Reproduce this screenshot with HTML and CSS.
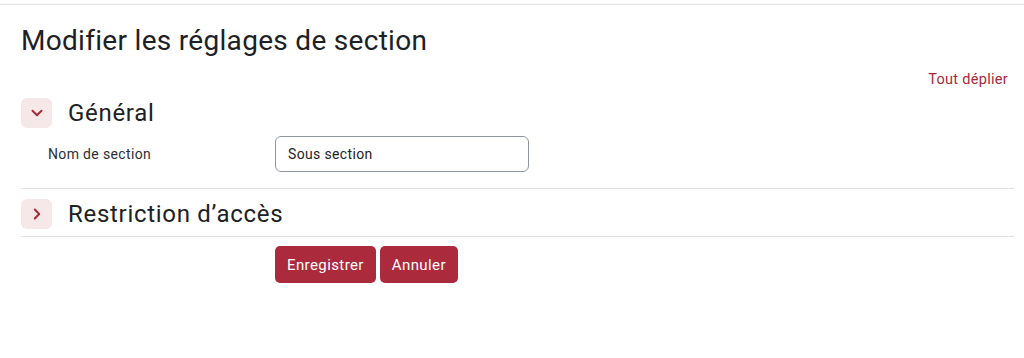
FILE: index.html
```html
<!DOCTYPE html>
<html>
<head>
  <title>Modifier les réglages de section</title>
  <link rel="stylesheet" href="styles.css">
</head>
<body>
  <div class="topbar"></div>

  <div class="page">
    <h1>Modifier les réglages de section</h1>

    <div class="expand-all">
      <a href="#">Tout déplier</a>
    </div>

    <form class="section-form">
      <fieldset class="group open">
        <div class="group-head">
          <span class="toggle">
            <svg width="14" height="14" viewBox="0 0 14 14"><path d="M2.5 4.8 L7 9.2 L11.5 4.8" fill="none" stroke="#a8273a" stroke-width="2" stroke-linecap="round" stroke-linejoin="round"/></svg>
          </span>
          <h3>Général</h3>
        </div>
        <div class="form-row">
          <label for="name">Nom de section</label>
          <input type="text" id="name" value="Sous section">
        </div>
      </fieldset>

      <fieldset class="group">
        <div class="group-head">
          <span class="toggle">
            <svg width="14" height="14" viewBox="0 0 14 14"><path d="M4.8 2.5 L9.2 7 L4.8 11.5" fill="none" stroke="#a8273a" stroke-width="2" stroke-linecap="round" stroke-linejoin="round"/></svg>
          </span>
          <h3>Restriction d’accès</h3>
        </div>
      </fieldset>

      <div class="actions">
        <button type="submit">Enregistrer</button>
        <button type="button">Annuler</button>
      </div>
    </form>
  </div>
</body>
</html>
```

FILE: styles.css
```css
body {
  margin: 0;
  font-family: Roboto, "Liberation Sans", sans-serif;
  color: #1d2125;
  background-color: #fff;
}

.topbar {
  height: 4px;
  border-bottom: 1px solid #e2e2e2;
}

.page {
  padding: 0 10px 0 21px;
}

h1 {
  margin: 19px 0 0 0;
  font-size: 28px;
  font-weight: 400;
  line-height: 34px;
  letter-spacing: 0.3px;
}

.expand-all {
  text-align: right;
  margin-top: 12px;
  padding-right: 6px;
  height: 20px;
  font-size: 14.5px;
  line-height: 20px;
  letter-spacing: 0.3px;
}

.expand-all a {
  color: #a8273a;
  text-decoration: none;
}

.section-form {
  margin: 0;
}

.group {
  margin: 0;
  padding: 0;
  border: none;
  border-bottom: 1px solid #dee2e6;
}

.group-head {
  display: flex;
  align-items: center;
  height: 30px;
  padding: 8px 0 4px 0;
}

.group + .group .group-head {
  padding: 10px 0 7px 0;
}

.toggle {
  width: 31px;
  height: 30px;
  border-radius: 6px;
  background-color: #f6e7e9;
  display: flex;
  align-items: center;
  justify-content: center;
  margin-right: 16px;
}

.group-head h3 {
  margin: 0;
  font-size: 24px;
  font-weight: 400;
  line-height: 30px;
  letter-spacing: 0.7px;
}

.form-row {
  display: flex;
  align-items: center;
  padding: 4px 0 16px 0;
}

.form-row label {
  width: 227px;
  padding-left: 27px;
  font-size: 14px;
  letter-spacing: 0.35px;
  color: #2b2f33;
}

.form-row input[type="text"] {
  width: 254px;
  height: 36px;
  box-sizing: border-box;
  border: 1px solid #8f959e;
  border-radius: 6px;
  padding: 0 12px;
  font-family: inherit;
  font-size: 14px;
  letter-spacing: 0.35px;
  color: #1d2125;
}

.actions {
  display: flex;
  gap: 4px;
  padding: 9px 0 0 254px;
}

.actions button {
  background-color: #ab2a3c;
  color: #fff;
  border: none;
  border-radius: 5px;
  height: 37px;
  padding: 0 12px;
  font-family: inherit;
  font-size: 15px;
  letter-spacing: 0.4px;
  cursor: pointer;
}
```
